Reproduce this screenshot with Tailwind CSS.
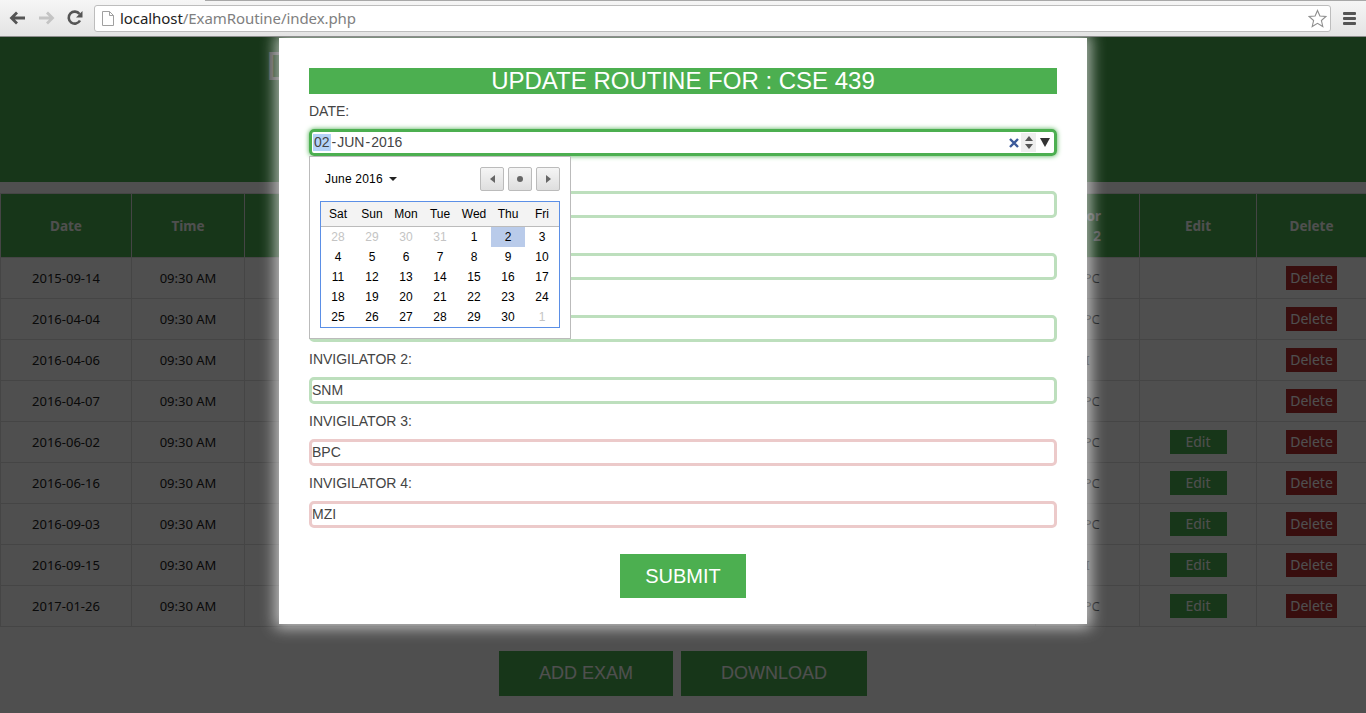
<!DOCTYPE html>
<html lang="en">

<head>
    <meta charset="UTF-8">
    <meta name="viewport" content="width=device-width, initial-scale=1.0">
    <script src="https://cdn.jsdelivr.net/npm/@tailwindcss/browser@4"></script>
    <title>Exam Routine</title>
</head>

<body class="h-screen overflow-hidden flex flex-col bg-white font-['Liberation_Sans',sans-serif]">

    <!-- browser toolbar -->
    <div class="relative h-[37px] shrink-0 flex items-center bg-gradient-to-b from-[#f6f6f6] to-[#e4e4e4] border-b border-[#8c8c8c]">
        <div class="absolute top-0 left-[205px] right-0 h-px bg-[#a8a8a8]"></div>
        <svg class="ml-[9px] w-[17px] h-[16px]" viewBox="0 0 17 16">
            <path d="M8 2.5 2.5 8 8 13.500M3 8h13" fill="none" stroke="#555" stroke-width="2.800" />
        </svg>
        <svg class="ml-[12px] w-[17px] h-[16px]" viewBox="0 0 17 16">
            <path d="M9 2.500 14.500 8 9 13.500M14 8H1" fill="none" stroke="#c4c4c4" stroke-width="2.800" />
        </svg>
        <svg class="ml-[12px] w-[16px] h-[16px]" viewBox="0 0 16 16">
            <path d="M13 10.500A6 6 0 1 1 12.500 4" fill="none" stroke="#555" stroke-width="2.600" />
            <path d="M15.500 1v6.500H9z" fill="#555" />
        </svg>
        <div class="ml-[11px] w-[1237px] h-[27px] flex items-center bg-white border border-[#bdbdbd] rounded-[3px]">
            <svg class="ml-[7px] w-[12px] h-[15px]" viewBox="0 0 12 15">
                <path d="M.5.500h7l4 4v10H.500zM7.500.500v4h4" fill="#fff" stroke="#a0a0a0" />
            </svg>
            <div class="ml-[6px] text-[15px] text-[#222] font-['Noto_Sans',sans-serif] tracking-[-0.07px]">localhost<span class="text-[#808080]">/ExamRoutine/index.php</span></div>
            <svg class="ml-auto mr-[3px] w-[19px] h-[19px]" viewBox="0 0 19 19">
                <path d="M9.500 1.500 11.900 7 18 7.500l-4.600 4 1.400 6-5.300-3.200-5.300 3.200 1.400-6L1 7.500 7.100 7z" fill="#fff" stroke="#8e8e8e" stroke-width="1.100" />
            </svg>
        </div>
        <div class="ml-[12px] w-[13px] flex flex-col gap-[2px]">
            <div class="h-[3px] rounded-[1px] bg-[#555]"></div>
            <div class="h-[3px] rounded-[1px] bg-[#555]"></div>
            <div class="h-[3px] rounded-[1px] bg-[#555]"></div>
        </div>
    </div>

    <div class="relative flex-1 overflow-hidden">

        <!-- page behind the popup -->
        <div class="h-[145px] bg-[#4CAF50] pl-[266px] pt-[6px] text-[40px] leading-[46px] text-white">D</div>

        <table class="mt-[11px] w-full table-fixed border-collapse font-['Noto_Sans',sans-serif] text-[13px] text-[#222]">
            <colgroup>
                <col class="w-[131px]">
                <col class="w-[113px]">
                <col class="w-[791px]">
                <col class="w-[104px]">
                <col class="w-[117px]">
                <col class="w-[110px]">
            </colgroup>
            <thead>
                <tr class="h-[64px] bg-[#4CAF50] text-white font-bold text-[13.5px] leading-[20px]">
                    <th class="border border-[#ddd]">Date</th>
                    <th class="border border-[#ddd]">Time</th>
                    <th class="border border-[#ddd]"></th>
                    <th class="border border-[#ddd] pr-[38px] whitespace-nowrap">
                        <div class="-ml-[10px] text-right">Invigilator<br>2</div>
                    </th>
                    <th class="border border-[#ddd]">Edit</th>
                    <th class="border border-[#ddd]">Delete</th>
                </tr>
            </thead>
            <tbody id="rows"></tbody>
        </table>

        <div class="mt-[24px] flex justify-center gap-[8px]">
            <button class="h-[45px] w-[174px] bg-[#4CAF50] text-white text-[18px]">ADD EXAM</button>
            <button class="h-[45px] w-[186px] bg-[#4CAF50] text-white text-[18px]">DOWNLOAD</button>
        </div>

        <div class="absolute inset-0 bg-black/[0.69]"></div>

        <!-- update popup -->
        <div class="absolute left-[279px] top-[1px] w-[808px] bg-white px-[30px] pt-[30px] pb-[26px] text-[14px] text-[#444] shadow-[0_0_14px_4px_rgba(255,255,255,0.65)]">
            <div class="h-[26px] bg-[#4CAF50] text-white text-[24px] leading-[26px] text-center">UPDATE ROUTINE FOR : CSE 439</div>

            <div class="h-[35px] flex items-center">DATE:</div>
            <div class="h-[27px] flex items-center border-[3px] border-[#4CAF50] rounded-[5px] shadow-[0_0_5px_#4CAF50] pl-[1px]">
                <span class="bg-[#b5d3f8] leading-[17px] px-px">02</span><span class="mx-px">-</span><span>JUN</span><span class="mx-px">-</span><span>2016</span>
                <svg class="ml-auto w-[10px] h-[10px]" viewBox="0 0 10 10">
                    <path d="M1 1l8 8M9 1l-8 8" stroke="#3c5a9a" stroke-width="2.400" />
                </svg>
                <div class="ml-[2px] w-[15px] h-[19px] bg-[#eeeeee] flex flex-col items-center justify-center gap-[3px]">
                    <svg class="w-[8px] h-[5px]" viewBox="0 0 8 5"><path d="M4 0l4 5H0z" fill="#555" /></svg>
                    <svg class="w-[8px] h-[5px]" viewBox="0 0 8 5"><path d="M4 5l4-5H0z" fill="#555" /></svg>
                </div>
                <svg class="ml-[4px] mr-[4px] w-[10px] h-[9px]" viewBox="0 0 10 9"><path d="M0 0h10L5 9z" fill="#333" /></svg>
            </div>

            <div class="h-[35px]"></div>
            <div class="h-[27px] border-[3px] border-[#bddfbd] rounded-[5px]"></div>
            <div class="h-[35px]"></div>
            <div class="h-[27px] border-[3px] border-[#bddfbd] rounded-[5px]"></div>
            <div class="h-[35px]"></div>
            <div class="h-[27px] border-[3px] border-[#bddfbd] rounded-[5px]"></div>

            <div class="h-[35px] flex items-center">INVIGILATOR 2:</div>
            <input value="SNM" class="block w-full h-[27px] pb-[2px] border-[3px] border-[#bddfbd] rounded-[5px] text-[#444]">
            <div class="h-[35px] flex items-center">INVIGILATOR 3:</div>
            <input value="BPC" class="block w-full h-[27px] pb-[2px] border-[3px] border-[#eccaca] rounded-[5px] text-[#444]">
            <div class="h-[35px] flex items-center">INVIGILATOR 4:</div>
            <input value="MZI" class="block w-full h-[27px] pb-[2px] border-[3px] border-[#eccaca] rounded-[5px] text-[#444]">

            <div class="mt-[26px] flex justify-center">
                <button class="w-[126px] h-[44px] bg-[#4CAF50] text-white text-[20px]">SUBMIT</button>
            </div>

            <!-- date picker dropdown -->
            <div class="absolute left-[30px] top-[118px] w-[262px] h-[183px] bg-white border border-[#bbb] text-[12px] text-black p-[10px]">
                <div class="h-[24px] flex items-center">
                    <span class="ml-[5px] tracking-[0.2px]">June 2016</span>
                    <svg class="ml-[6px] w-[8px] h-[4px]" viewBox="0 0 8 4"><path d="M0 0h8L4 4z" fill="#222" /></svg>
                    <div class="ml-auto flex gap-[4px]">
                        <div class="w-[24px] h-[24px] flex items-center justify-center rounded-[2px] border border-[#bbb] bg-gradient-to-b from-[#f5f5f5] to-[#dedede]">
                            <svg class="w-[5px] h-[8px]" viewBox="0 0 5 8"><path d="M5 0v8L0 4z" fill="#666" /></svg>
                        </div>
                        <div class="w-[24px] h-[24px] flex items-center justify-center rounded-[2px] border border-[#bbb] bg-gradient-to-b from-[#f5f5f5] to-[#dedede]">
                            <div class="w-[6px] h-[6px] rounded-full bg-[#666]"></div>
                        </div>
                        <div class="w-[24px] h-[24px] flex items-center justify-center rounded-[2px] border border-[#bbb] bg-gradient-to-b from-[#f5f5f5] to-[#dedede]">
                            <svg class="w-[5px] h-[8px]" viewBox="0 0 5 8"><path d="M0 0v8l5-4z" fill="#666" /></svg>
                        </div>
                    </div>
                </div>
                <div class="mt-[10px] border border-[#5b8fe6]">
                    <div class="grid grid-cols-7 h-[25px] items-center text-center bg-[#f3f3f3] border-b border-[#bbb]">
                        <div>Sat</div><div>Sun</div><div>Mon</div><div>Tue</div><div>Wed</div><div>Thu</div><div>Fri</div>
                    </div>
                    <div id="days" class="grid grid-cols-7"></div>
                </div>
            </div>
        </div>
    </div>

    <script>
        // table rows
        var exams = [
            ['2015-09-14', 'BPC', false],
            ['2016-04-04', 'BPC', false],
            ['2016-04-06', 'I', false],
            ['2016-04-07', 'BPC', false],
            ['2016-06-02', 'BPC', true],
            ['2016-06-16', 'BPC', true],
            ['2016-09-03', 'BPC', true],
            ['2016-09-15', 'I', true],
            ['2017-01-26', 'BPC', true]
        ];
        var rows = '';
        for (var i = 0; i < exams.length; i++) {
            var edit = exams[i][2] ? '<span class="inline-block w-[57px] h-[24px] leading-[24px] bg-[#4CAF50] text-white text-[14px]">Edit</span>' : '';
            rows += '<tr class="h-[41px] text-center">'
                + '<td class="border border-[#ddd] pt-px">' + exams[i][0] + '</td>'
                + '<td class="border border-[#ddd] pt-px">09:30 AM</td>'
                + '<td class="border border-[#ddd]"></td>'
                + '<td class="border border-[#ddd] pt-px">' + exams[i][1] + '</td>'
                + '<td class="border border-[#ddd]">' + edit + '</td>'
                + '<td class="border border-[#ddd]"><span class="inline-block w-[51px] h-[24px] leading-[24px] bg-[#b52f2f] text-white text-[14px]">Delete</span></td>'
                + '</tr>';
        }
        document.getElementById('rows').innerHTML = rows;

        // calendar days, first four and last one belong to other months
        var days = [28, 29, 30, 31];
        for (var d = 1; d <= 30; d++) days.push(d);
        days.push(1);
        var cells = '';
        for (var j = 0; j < days.length; j++) {
            var cls = 'h-[20px] leading-[20px] text-center';
            if (j < 4 || j == 34) cls = 'h-[20px] leading-[20px] text-center text-[#c4c4c4]';
            if (j == 5) cls = 'h-[20px] leading-[20px] text-center bg-[#b9cbea]';
            cells += '<div class="' + cls + '">' + days[j] + '</div>';
        }
        document.getElementById('days').innerHTML = cells;
    </script>
</body>

</html>
